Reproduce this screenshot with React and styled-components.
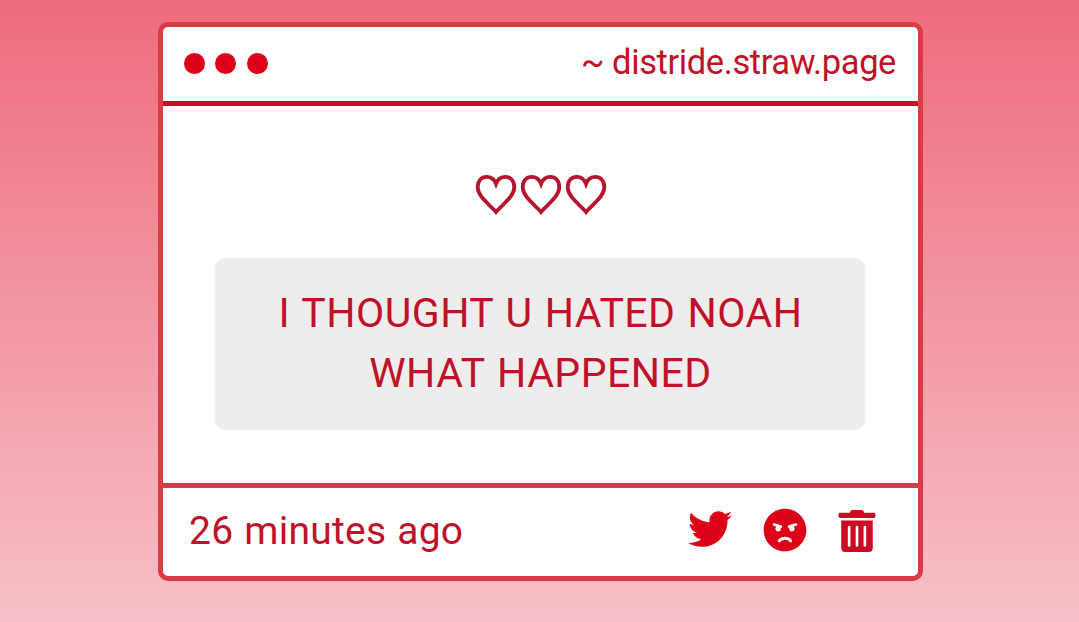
import React from "react";
import styled, { createGlobalStyle } from "styled-components";
import { FaTwitter, FaAngry, FaTrashAlt } from "react-icons/fa";

const GlobalStyle = createGlobalStyle`
  * { box-sizing: border-box; }
  body { margin: 0; }
`;

const Page = styled.main`
  display: flex;
  justify-content: center;
  align-items: flex-start;
  height: 622px;
  padding: 22px 0 0 2px;
  overflow: hidden;
  background: linear-gradient(#ee6c7d, #f7c0c8);
  font-family: Roboto, "Liberation Sans", sans-serif;
  color: #bf1129;
`;

const Window = styled.section`
  display: flex;
  flex-direction: column;
  width: 765px;
  height: 559px;
  border: 5px solid #d93c46;
  border-radius: 10px;
  background: #fff;
`;

const TitleBar = styled.header`
  display: flex;
  justify-content: space-between;
  align-items: center;
  height: 79px;
  padding: 0 22px 2px 21px;
  border-bottom: 5px solid #c3132b;
`;

const Dots = styled.div`
  display: flex;
  gap: 10.4px;
`;

const Dot = styled.span`
  width: 21px;
  height: 21px;
  border-radius: 50%;
  background: #dc0019;
`;

const Address = styled.span`
  padding-bottom: 2px;
  font-size: 34.5px;
  line-height: 40px;
  letter-spacing: -0.4px;
`;

const Body = styled.div`
  display: flex;
  flex-direction: column;
  flex: 1;
  padding: 68px 52px 0;
`;

const Hearts = styled.div`
  display: flex;
  justify-content: center;
  gap: 3px;
  height: 42px;
  margin-bottom: 42px;
`;

const Message = styled.p`
  width: 650px;
  height: 172px;
  margin: 0;
  padding: 25px 49px 25px 50px;
  border-radius: 10px;
  background: #eeecec;
  font-size: 41px;
  line-height: 60px;
  letter-spacing: 0.48px;
  word-spacing: 1.4px;
  text-align: center;
`;

const Footer = styled.footer`
  display: flex;
  justify-content: space-between;
  align-items: center;
  height: 93px;
  padding: 0 40px 3px 26px;
  border-top: 5px solid #d03c48;
`;

const Time = styled.time`
  font-size: 39px;
  line-height: 46px;
  letter-spacing: 0.25px;
  word-spacing: 1px;
`;

const Actions = styled.div`
  display: flex;
  align-items: center;
  gap: 31px;
`;

const Action = styled.span`
  display: flex;
  padding-bottom: ${(p) => p.$lift || 0}px;
  color: ${(p) => p.$tone};

  &:last-child {
    margin-left: -2px;
    padding-top: 1px;
  }
`;

const Heart = () => (
  <svg width="42" height="42" viewBox="0 0 42 42" fill="none" stroke="#b5152e" strokeWidth="3.8">
    <path d="M21 38 C15 30.5 2.7 23 2.7 13 C2.7 6.5 6.8 2.9 11.6 2.9 C16 2.9 19.4 5.6 21 9.8 C22.6 5.6 26 2.9 30.4 2.9 C35.2 2.9 39.3 6.5 39.3 13 C39.3 23 27 30.5 21 38 Z" />
  </svg>
);

export default function App() {
  return (
    <>
      <GlobalStyle />
      <Page>
        <Window>
          <TitleBar>
            <Dots>
              <Dot />
              <Dot />
              <Dot />
            </Dots>
            <Address>~ distride.straw.page</Address>
          </TitleBar>
          <Body>
            <Hearts>
              <Heart />
              <Heart />
              <Heart />
            </Hearts>
            <Message>
              I THOUGHT U HATED NOAH
              <br />
              WHAT HAPPENED
            </Message>
          </Body>
          <Footer>
            <Time>26 minutes ago</Time>
            <Actions>
              <Action $tone="#dc0019" $lift={3}><FaTwitter size={44} /></Action>
              <Action $tone="#dc0019" $lift={1}><FaAngry size={44} /></Action>
              <Action $tone="#cc0a22"><FaTrashAlt size={42} /></Action>
            </Actions>
          </Footer>
        </Window>
      </Page>
    </>
  );
}
